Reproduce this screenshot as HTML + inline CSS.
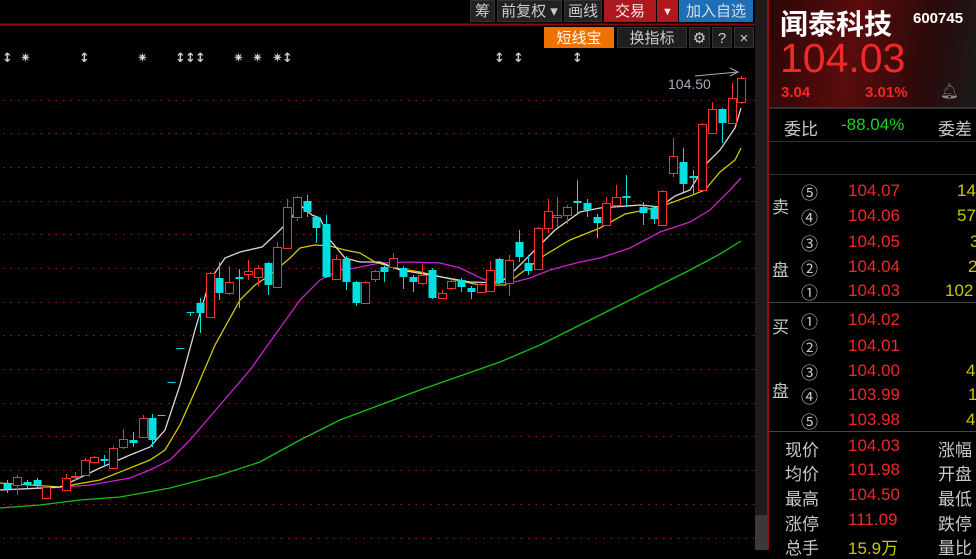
<!DOCTYPE html>
<html><head><meta charset="utf-8"><style>
*{margin:0;padding:0;box-sizing:border-box}
body{width:976px;height:550px;background:#000;overflow:hidden;position:relative;font-family:"Liberation Sans","Noto Sans CJK SC",sans-serif;color:#ccc}
.a{position:absolute;white-space:nowrap}
.btn{position:absolute;top:0;height:22px;line-height:22px;font-size:15px;text-align:center;color:#ccc;background:#222;border:1px solid #333}
.b2{position:absolute;top:27px;height:21px;line-height:21px;font-size:15px;text-align:center;color:#ccc;background:#1e1e1e;border:1px solid #333}
.r{color:#f02828}.y{color:#c8c800}.g{color:#20d020}.w{color:#c8c8c8}
.row{position:absolute;left:770px;width:206px;height:25px;font-size:17px}
</style></head><body>
<svg class="a" style="left:0;top:0" width="756" height="550">
<line x1="0" y1="24.5" x2="756" y2="24.5" stroke="#8a0a0a" stroke-width="2"/>
<g stroke="#a01818" stroke-width="1" stroke-dasharray="1.5,6">
<line x1="3" y1="100.5" x2="756" y2="100.5"/><line x1="3" y1="133.5" x2="756" y2="133.5"/><line x1="3" y1="167.5" x2="756" y2="167.5"/><line x1="3" y1="201.5" x2="756" y2="201.5"/><line x1="3" y1="234.5" x2="756" y2="234.5"/><line x1="3" y1="268.5" x2="756" y2="268.5"/><line x1="3" y1="302.5" x2="756" y2="302.5"/><line x1="3" y1="335.5" x2="756" y2="335.5"/><line x1="3" y1="369.5" x2="756" y2="369.5"/><line x1="3" y1="403.5" x2="756" y2="403.5"/><line x1="3" y1="436.5" x2="756" y2="436.5"/><line x1="3" y1="470.5" x2="756" y2="470.5"/><line x1="3" y1="504.5" x2="756" y2="504.5"/><line x1="3" y1="538.5" x2="756" y2="538.5"/>
</g>
<g fill="#ccc" font-size="13" font-weight="bold" font-family="DejaVu Sans">
<text x="2" y="62">↕</text><text x="20" y="62">✷</text><text x="79" y="62">↕</text><text x="137" y="62">✷</text><text x="175" y="62">↕</text><text x="185" y="62">↕</text><text x="195" y="62">↕</text><text x="233" y="62">✷</text><text x="252" y="62">✷</text><text x="272" y="62">✷</text><text x="282" y="62">↕</text><text x="494" y="62">↕</text><text x="513" y="62">↕</text><text x="572" y="62">↕</text>
</g>
<g fill="none" stroke-width="1.3">
<polyline stroke="#18c018" points="0,508 40,505 80,500 120,497 170,488 220,475 260,462 300,440 320,430 340,420 380,405 420,390 460,376 500,362 540,345 580,325 620,305 660,285 690,270 720,254 741,241"/>
<polyline stroke="#d020d0" points="0,490 50,488 90,485 130,478 150,470 170,460 190,440 220,405 250,370 275,335 300,300 320,280 340,270 355,268 380,263 410,262 440,263 460,268 485,280 510,283 530,278 550,270 580,262 600,258 630,248 660,232 690,222 710,210 730,190 741,178"/>
<polyline stroke="#d0c800" points="0,483 60,487 100,480 150,460 165,450 180,425 200,380 215,345 240,300 255,285 270,275 290,258 300,248 315,245 330,246 345,250 360,253 375,262 395,268 420,272 455,280 480,285 505,285 525,270 545,255 570,240 600,228 625,214 645,210 665,205 690,196 705,190 720,172 735,160 741,148"/>
<polyline stroke="#d8d8d8" points="0,490 60,487 75,480 100,468 130,455 150,447 165,430 180,385 195,330 210,280 225,258 240,252 262,247 275,235 290,220 300,205 312,215 320,218 330,240 345,258 360,262 380,262 400,270 430,275 470,282 500,283 515,270 535,250 555,230 580,212 600,208 640,205 660,207 675,196 690,190 705,165 720,150 735,128 741,108"/>
</g>
<g id="c"></g>
<line x1="695" y1="76" x2="738" y2="72" stroke="#aaa"/><polyline points="730,68 738,72 730,76" fill="none" stroke="#aaa"/>
<text x="668" y="89" fill="#aab" font-size="14">104.50</text>
</svg>
<script>
var d=[[7,'c',484,489,480,493],[17,'r',477,485,475,495],[27,'c',482,485,480,488],[37,'c',480,485,478,488],[46,'r',487,498,485,498],[66,'r',478,490,474,490],[75,'r',476,477,472,480],[85,'r',460,475,458,476],[94,'r',457,462,456,463],[104,'c',459,461,455,465],[113,'r',448,468,446,469],[123,'r',439,447,429,449],[133,'c',440,443,432,447],[143,'r',418,437,415,438],[152,'c',418,440,414,447],[161,'c',415,416,415,416],[171,'c',382,383,382,383],[180,'c',348,349,348,349],[190,'c',312,313,312,316],[200,'c',303,313,298,333],[210,'r',273,317,272,318],[219,'c',278,293,262,300],[229,'r',282,293,266,295],[239,'c',277,279,269,308],[248,'r',271,274,260,280],[258,'r',268,277,265,286],[268,'c',263,285,262,295],[277,'r',247,287,242,288],[287,'r',207,248,199,249],[297,'r',197,217,196,221],[307,'c',201,212,195,217],[316,'c',217,228,216,243],[326,'c',224,277,215,278],[336,'r',259,279,255,280],[346,'c',259,282,256,290],[356,'c',282,303,281,306],[365,'r',282,303,281,304],[375,'r',271,279,270,282],[384,'c',267,272,266,282],[393,'r',258,267,253,270],[403,'c',268,277,266,289],[413,'c',277,282,275,292],[422,'r',275,283,264,285],[432,'c',270,298,268,299],[442,'r',293,298,290,299],[451,'r',281,288,279,290],[461,'c',280,287,278,292],[471,'c',288,292,286,299],[481,'r',284,292,283,293],[490,'r',270,291,261,292],[499,'c',259,283,258,284],[509,'r',260,283,255,296],[519,'c',242,257,230,262],[528,'c',263,271,255,275],[538,'r',228,269,227,270],[548,'r',211,228,199,233],[557,'r',215,217,197,227],[567,'r',207,215,205,224],[577,'c',201,203,180,215],[587,'c',203,210,199,217],[597,'c',217,223,214,238],[606,'r',203,225,197,226],[616,'r',197,205,185,207],[626,'c',196,198,175,207],[643,'c',207,213,202,225],[654,'c',208,219,206,224],[662,'r',191,225,190,226],[673,'r',156,173,138,177],[683,'c',162,184,148,192],[693,'c',176,178,170,195],[702,'r',124,190,123,191],[712,'r',109,133,102,134],[722,'c',109,123,108,143],[732,'r',98,123,83,124],[741,'r',78,102,76,104]];
var s='';d.forEach(function(k){var x=k[0],col=k[1]=='r'?'#ff3030':'#00e0e0';s+='<line x1="'+(x+.5)+'" y1="'+k[4]+'" x2="'+(x+.5)+'" y2="'+k[5]+'" stroke="'+col+'"/>';var h=Math.max(1,k[3]-k[2]);if(k[1]=='r')s+='<rect x="'+(x-3.5)+'" y="'+(k[2]+.5)+'" width="8" height="'+h+'" fill="#000" stroke="'+col+'"/>';else s+='<rect x="'+(x-3.5)+'" y="'+k[2]+'" width="8" height="'+h+'" fill="'+col+'"/>';});
document.getElementById('c').innerHTML=s;
</script>
<div class="btn" style="left:470px;width:25px">筹</div>
<div class="btn" style="left:497px;width:65px">前复权 ▾</div>
<div class="btn" style="left:564px;width:38px">画线</div>
<div class="btn" style="left:604px;width:52px;background:#b01820;border-color:#b01820;color:#eee">交易</div>
<div class="btn" style="left:657px;width:21px;background:#b01820;border-color:#b01820;color:#eee;font-size:11px">▼</div>
<div class="btn" style="left:679px;width:74px;background:#1f6fb8;border-color:#1f6fb8;color:#ddd">加入自选</div>
<div class="b2" style="left:544px;width:70px;background:#f07000;border-color:#f07000;color:#fff">短线宝</div>
<div class="b2" style="left:617px;width:70px">换指标</div>
<div class="b2" style="left:689px;width:21px">⚙</div>
<div class="b2" style="left:712px;width:20px">?</div>
<div class="b2" style="left:734px;width:20px">×</div>
<div class="a" style="left:755px;top:0;width:13px;height:550px;background:#1c1c1c"></div>
<div class="a" style="left:755px;top:515px;width:13px;height:35px;background:#3a3a3a"></div>
<div class="a" style="left:767px;top:0;width:2px;height:550px;background:#9a0c0c"></div>
<div class="a" style="left:769px;top:0;width:207px;height:107px;background:linear-gradient(100deg,#2a0606,#5a0c0c 40%,#2a0a0a 75%,#1a1a1a)"></div>
<div class="a" style="left:780px;top:3px;font-size:28px;font-weight:bold;color:#fff">闻泰科技</div>
<div class="a" style="left:913px;top:10px;font-size:15px;font-weight:bold;color:#fff">600745</div>
<div class="a r" style="left:780px;top:35px;font-size:41px">104.03</div>
<div class="a r" style="left:781px;top:84px;font-size:15px;font-weight:bold">3.04</div>
<div class="a r" style="left:865px;top:84px;font-size:15px;font-weight:bold">3.01%</div>
<div class="a" style="left:940px;top:82px;font-size:15px;color:#888">🔔︎</div>
<div class="a" style="left:769px;top:107px;width:207px;height:2px;background:#333"></div>
<div class="a w" style="left:784px;top:115px;font-size:17px">委比</div>
<div class="a g" style="left:841px;top:115px;font-size:17px">-88.04%</div>
<div class="a w" style="left:938px;top:115px;font-size:17px">委差</div>
<div class="a" style="left:769px;top:141px;width:207px;height:1px;background:#333"></div>
<div class="a" style="left:769px;top:174px;width:207px;height:1px;background:#333"></div>
<div class="a" style="left:769px;top:302px;width:207px;height:1px;background:#444"></div>
<div class="a" style="left:769px;top:431px;width:207px;height:1px;background:#444"></div>
<div class="a w" style="left:772px;top:193px;font-size:17px">卖</div>
<div class="a w" style="left:772px;top:256px;font-size:17px">盘</div>
<div class="a w" style="left:772px;top:313px;font-size:17px">买</div>
<div class="a w" style="left:772px;top:377px;font-size:17px">盘</div>
<div style="position:absolute;left:0;top:0;font-size:17px">
<div class="row" style="top:181px"><span class="a w" style="left:31px;top:-2px">⑤</span><span class="a r" style="left:78px">104.07</span><span class="a y" style="left:187px">14</span></div>
<div class="row" style="top:206px"><span class="a w" style="left:31px;top:-2px">④</span><span class="a r" style="left:78px">104.06</span><span class="a y" style="left:187px">57</span></div>
<div class="row" style="top:232px"><span class="a w" style="left:31px;top:-2px">③</span><span class="a r" style="left:78px">104.05</span><span class="a y" style="left:200px">3</span></div>
<div class="row" style="top:257px"><span class="a w" style="left:31px;top:-2px">②</span><span class="a r" style="left:78px">104.04</span><span class="a y" style="left:198px">2</span></div>
<div class="row" style="top:281px"><span class="a w" style="left:31px;top:-2px">①</span><span class="a r" style="left:78px">104.03</span><span class="a y" style="left:175px">102</span></div>
<div class="row" style="top:310px"><span class="a w" style="left:31px;top:-2px">①</span><span class="a r" style="left:78px">104.02</span></div>
<div class="row" style="top:336px"><span class="a w" style="left:31px;top:-2px">②</span><span class="a r" style="left:78px">104.01</span></div>
<div class="row" style="top:361px"><span class="a w" style="left:31px;top:-2px">③</span><span class="a r" style="left:78px">104.00</span><span class="a y" style="left:196px">4</span></div>
<div class="row" style="top:385px"><span class="a w" style="left:31px;top:-2px">④</span><span class="a r" style="left:78px">103.99</span><span class="a y" style="left:198px">1</span></div>
<div class="row" style="top:410px"><span class="a w" style="left:31px;top:-2px">⑤</span><span class="a r" style="left:78px">103.98</span><span class="a y" style="left:196px">4</span></div>
<div class="row" style="top:436px"><span class="a w" style="left:15px">现价</span><span class="a r" style="left:78px">104.03</span><span class="a w" style="left:168px">涨幅</span></div>
<div class="row" style="top:460px"><span class="a w" style="left:15px">均价</span><span class="a r" style="left:78px">101.98</span><span class="a w" style="left:168px">开盘</span></div>
<div class="row" style="top:485px"><span class="a w" style="left:15px">最高</span><span class="a r" style="left:78px">104.50</span><span class="a w" style="left:168px">最低</span></div>
<div class="row" style="top:510px"><span class="a w" style="left:15px">涨停</span><span class="a r" style="left:78px">111.09</span><span class="a w" style="left:168px">跌停</span></div>
<div class="row" style="top:534px"><span class="a w" style="left:15px">总手</span><span class="a y" style="left:78px">15.9万</span><span class="a w" style="left:168px">量比</span></div>
</div>
</body></html>
